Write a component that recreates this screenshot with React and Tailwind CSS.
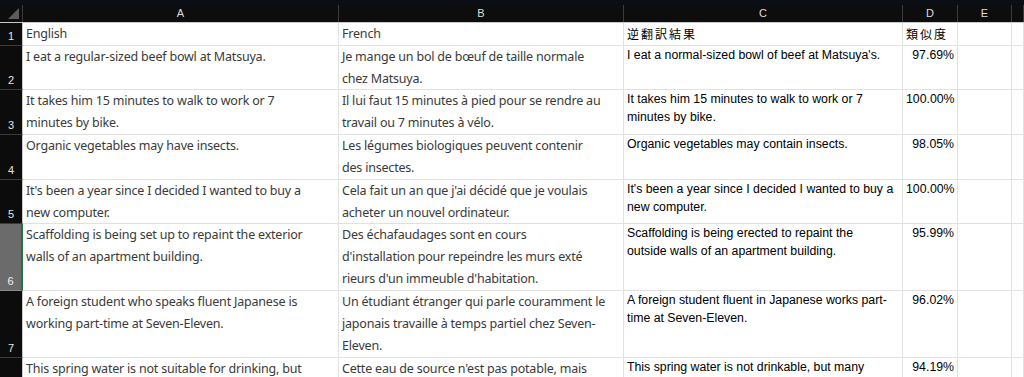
import React from "react";

const rows = [
  {
    n: 1,
    h: "h-[23px]",
    a: ["English"],
    b: ["French"],
    c: ["逆翻訳結果"],
    d: "類似度",
    header: true,
  },
  {
    n: 2,
    h: "h-[44px]",
    a: ["I eat a regular-sized beef bowl at Matsuya."],
    b: ["Je mange un bol de bœuf de taille normale", "chez Matsuya."],
    c: ["I eat a normal-sized bowl of beef at Matsuya's."],
    d: "97.69%",
  },
  {
    n: 3,
    h: "h-[45px]",
    a: ["It takes him 15 minutes to walk to work or 7", "minutes by bike."],
    b: ["Il lui faut 15 minutes à pied pour se rendre au", "travail ou 7 minutes à vélo."],
    c: ["It takes him 15 minutes to walk to work or 7", "minutes by bike."],
    d: "100.00%",
  },
  {
    n: 4,
    h: "h-[45px]",
    a: ["Organic vegetables may have insects."],
    b: ["Les légumes biologiques peuvent contenir", "des insectes."],
    c: ["Organic vegetables may contain insects."],
    d: "98.05%",
  },
  {
    n: 5,
    h: "h-[44px]",
    a: ["It's been a year since I decided I wanted to buy a", "new computer."],
    b: ["Cela fait un an que j'ai décidé que je voulais", "acheter un nouvel ordinateur."],
    c: ["It's been a year since I decided I wanted to buy a", "new computer."],
    d: "100.00%",
  },
  {
    n: 6,
    h: "h-[67px]",
    selected: true,
    a: ["Scaffolding is being set up to repaint the exterior", "walls of an apartment building."],
    b: [
      "Des échafaudages sont en cours",
      "d'installation pour repeindre les murs exté",
      "rieurs d'un immeuble d'habitation.",
    ],
    c: ["Scaffolding is being erected to repaint the", "outside walls of an apartment building."],
    d: "95.99%",
  },
  {
    n: 7,
    h: "h-[67px]",
    a: ["A foreign student who speaks fluent Japanese is", "working part-time at Seven-Eleven."],
    b: [
      "Un étudiant étranger qui parle couramment le",
      "japonais travaille à temps partiel chez Seven-",
      "Eleven.",
    ],
    c: ["A foreign student fluent in Japanese works part-", "time at Seven-Eleven."],
    d: "96.02%",
  },
  {
    n: 8,
    h: "h-[60px]",
    a: ["This spring water is not suitable for drinking, but"],
    b: ["Cette eau de source n'est pas potable, mais"],
    c: ["This spring water is not drinkable, but many"],
    d: "94.19%",
  },
];

const grid = "grid grid-cols-[23px_316px_285px_279px_55px_54px_12px]";
const cell = "border-r border-b border-[#e1e1e1] bg-white overflow-hidden";
const latinA =
  "px-[3px] text-[12.5px] leading-[22px] text-[#3a3a3a] whitespace-nowrap [font-family:'Noto_Sans',sans-serif] tracking-[-0.2px]";
const latinC =
  "px-[3px] text-[12.3px] leading-[18px] text-black whitespace-nowrap [font-family:'Liberation_Sans',Arial,sans-serif]";
const cjk =
  "px-[3px] text-[12px] leading-[22px] text-black whitespace-nowrap [font-family:'Noto_Sans_CJK_JP',sans-serif] tracking-[2px]";

function Lines({ lines, className }) {
  return (
    <div className={className}>
      {lines.map((l, i) => (
        <div key={i}>{l}</div>
      ))}
    </div>
  );
}

export default function App() {
  const colHeads = ["A", "B", "C", "D", "E", ""];
  return (
    <div className="w-[1024px] h-[377px] overflow-hidden bg-[#0b0e14] select-none">
      <div className="h-[5px] bg-[#0b0e14]" />
      <div className={`${grid} h-[18px] bg-[#0d0d0d] border-b border-[#c8c8c8]`}>
        <div className="relative border-r border-[#3c3c3c]">
          <div className="absolute right-[3px] bottom-[3px] w-0 h-0 border-l-[11px] border-l-transparent border-b-[11px] border-b-[#5c5c5c]" />
        </div>
        {colHeads.map((c, i) => (
          <div
            key={i}
            className="flex items-center justify-center border-r border-[#3c3c3c] text-[11px] text-[#dedede] [font-family:'Liberation_Sans',Arial,sans-serif]"
          >
            {c}
          </div>
        ))}
      </div>
      {rows.map((r) => (
        <div key={r.n} className={`${grid} ${r.h}`}>
          <div
            className={
              r.selected
                ? "flex items-end justify-center pb-[1px] bg-[#6b6b6b] border-r-2 border-r-[#217346] border-b border-b-[#8a8a8a] text-[11px] text-[#f2f2f2] [font-family:'Liberation_Sans',Arial,sans-serif]"
                : "flex items-end justify-center pb-[1px] bg-[#0c0c0c] border-r border-r-[#c8c8c8] border-b border-b-[#3a3a3a] text-[11px] text-[#e6e6e6] [font-family:'Liberation_Sans',Arial,sans-serif]"
            }
          >
            {r.n}
          </div>
          <div className={cell}>
            <Lines lines={r.a} className={latinA} />
          </div>
          <div className={cell}>
            <Lines lines={r.b} className={latinA} />
          </div>
          <div className={cell}>
            <Lines lines={r.c} className={r.header ? cjk : latinC} />
          </div>
          <div className={cell}>
            {r.header ? (
              <div className={cjk}>{r.d}</div>
            ) : (
              <div className={`${latinC} text-right`}>{r.d}</div>
            )}
          </div>
          <div className={cell} />
          <div className={cell} />
        </div>
      ))}
    </div>
  );
}
